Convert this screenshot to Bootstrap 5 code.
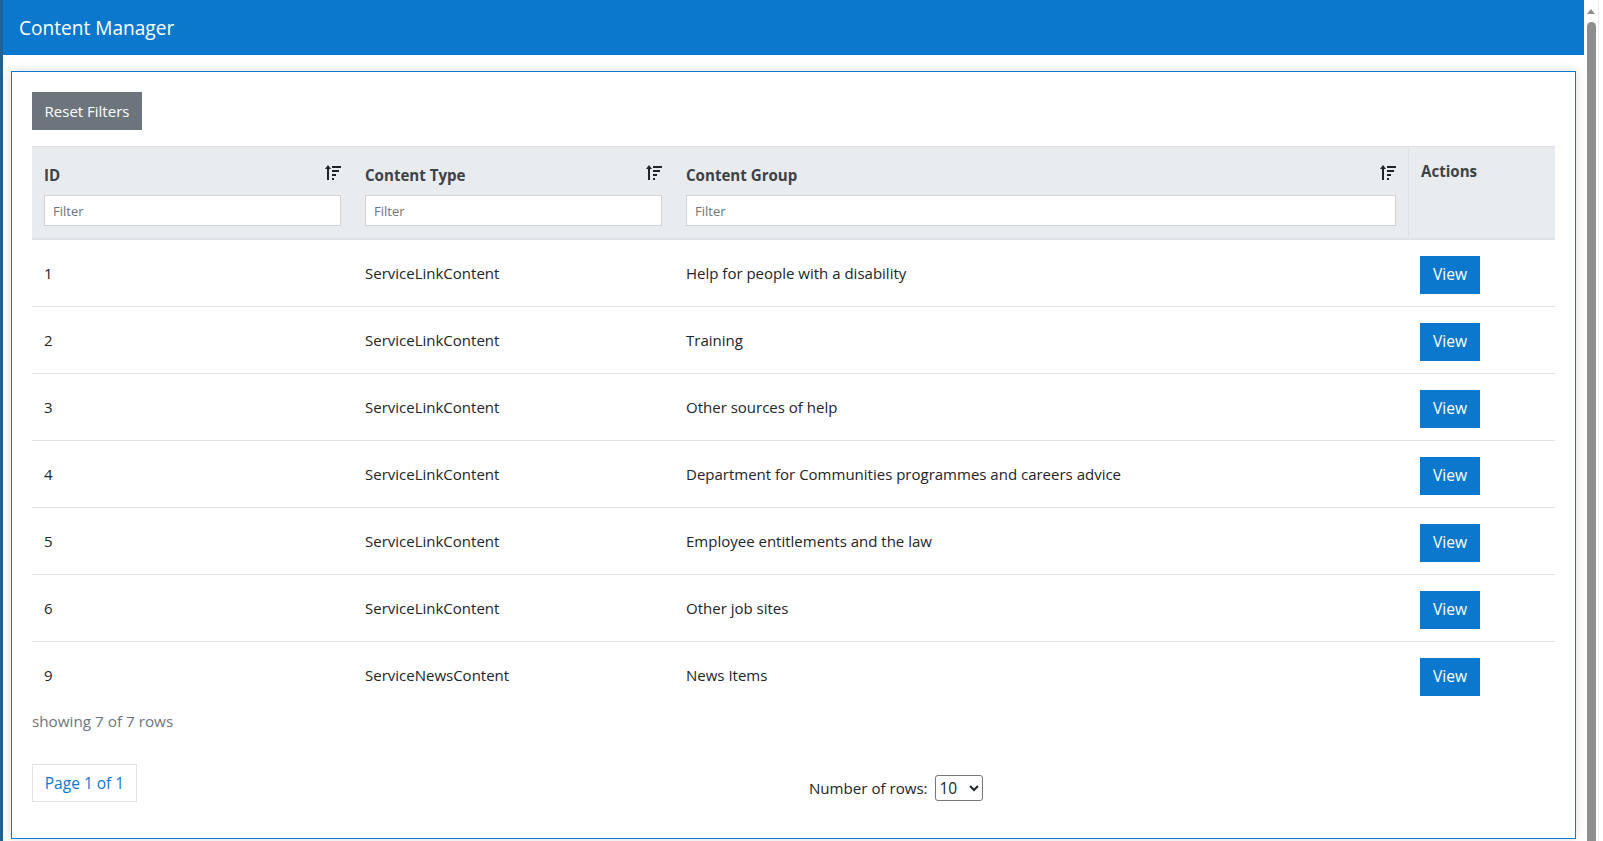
<!doctype html>
<html lang="en"><head><meta charset="utf-8"><title>Content Manager</title>
<link rel="stylesheet" href="https://cdn.jsdelivr.net/npm/bootstrap@5.3.0/dist/css/bootstrap.min.css">
<style>
html,body{height:100%;overflow:hidden}
body{font-family:"Open Sans","Noto Sans","Liberation Sans",sans-serif;font-size:15px;color:#212529;background:#fff}
.desk{height:841px;background:#fff}
.leftedge{width:3px;background:#1f6296;height:841px;flex:none}
.appcol{width:1581px;flex:none}
.topbar{height:55px;background:#0b78cd;color:#fff;font-size:19.1px;padding:2px 0 0 16px}
.panelbox{margin:16px 8px 0 8px;height:768px;border:1px solid #0b78cd;padding:20px;box-shadow:0 0 10px rgba(0,0,0,.14);background:#fff}
.btn-reset{background:#6c757d;color:#fff;border:0;border-radius:0;width:110px;height:38px;font-size:15px;padding:1px 0 0}
.gridtbl{width:1523px;margin-top:16px;border-collapse:separate;border-spacing:0;table-layout:fixed}
.gridtbl col:nth-child(1),.gridtbl col:nth-child(2){width:321px}
.gridtbl col:nth-child(3){width:734px}
.gridtbl col:nth-child(4){width:147px}
.gridtbl th{background:#e9ecef;border-top:1px solid #dee2e6;border-bottom:2px solid #dee2e6;vertical-align:top;padding:12px;font-weight:700;font-size:15.1px;color:#3d4247}
.gridtbl td{height:67px;border-bottom:1px solid #dee2e6;padding:16px 12px 0;vertical-align:top}
.gridtbl tr:last-child td{border-bottom:0}
.gridtbl th+th.actcol{border-left:1px solid #dee2e6;padding-left:12px}
.acttitle{display:block;margin-top:1px}
.headrow{height:24px;margin-top:5px}
.sorticon{width:16px;height:16px;display:block;margin-top:1px}
.filterbox{height:31px;border:1px solid #ced4da;border-radius:0;font-size:13px;padding:0 8px;margin-top:7px;width:100%;display:block;color:#6c757d}
.filterbox::placeholder{color:#6c757d}
.celltext{display:block;margin-top:6px}
.btn-view{background:#0b78cd;color:#fff;border:0;border-radius:0;width:60px;height:38px;padding:0;font-size:15.6px}
.countline{color:#6c757d;margin-top:0;line-height:24px;font-size:15.25px}
.pagerbox{width:105px;height:38px;border:1px solid #dee2e6;color:#0b78cd;margin-top:31px;line-height:36px;text-align:center;font-size:15.5px}
.rowpick{margin-left:777px;margin-top:-27px;font-size:15.1px}
.rowpick select{width:48px;height:26px;font-size:15.5px;margin-left:3px;padding:0;border:1px solid #767676;border-radius:3px;background:#fff;color:#212529}
.scrollcol{width:15px;flex:none;position:relative;border-right:1px solid #eee}
.thumbbar{margin:22px 0 0 3px;width:9px;height:819px;background:#8e8e8e;border-radius:5px 5px 0 0}
.uparrow{position:absolute;left:3px;top:9px;width:0;height:0;border-left:4.5px solid transparent;border-right:4.5px solid transparent;border-bottom:5px solid #8e8e8e}
</style></head><body>
<div class="d-flex desk">
<div class="leftedge"></div>
<div class="appcol">
<div class="topbar d-flex align-items-center">Content Manager</div>
<div class="panelbox">
<button class="btn btn-reset d-block" type="button">Reset Filters</button>
<table class="gridtbl">
<colgroup><col><col><col><col></colgroup>
<thead><tr>
<th><div class="d-flex justify-content-between headrow"><span>ID</span><svg class="sorticon" viewBox="0 0 16 16"><path d="M3 0l3 4H4v11H2V4H0z" fill="#212529"/><path d="M7 2h9M7 6h7M7 10h4M7 14h2" stroke="#212529" stroke-width="2"/></svg></div><input class="filterbox" placeholder="Filter"></th>
<th><div class="d-flex justify-content-between headrow"><span>Content Type</span><svg class="sorticon" viewBox="0 0 16 16"><path d="M3 0l3 4H4v11H2V4H0z" fill="#212529"/><path d="M7 2h9M7 6h7M7 10h4M7 14h2" stroke="#212529" stroke-width="2"/></svg></div><input class="filterbox" placeholder="Filter"></th>
<th><div class="d-flex justify-content-between headrow"><span>Content Group</span><svg class="sorticon" viewBox="0 0 16 16"><path d="M3 0l3 4H4v11H2V4H0z" fill="#212529"/><path d="M7 2h9M7 6h7M7 10h4M7 14h2" stroke="#212529" stroke-width="2"/></svg></div><input class="filterbox" placeholder="Filter"></th>
<th class="actcol"><span class="acttitle">Actions</span></th>
</tr></thead>
<tbody>
<tr><td><span class="celltext">1</span></td><td><span class="celltext">ServiceLinkContent</span></td><td><span class="celltext">Help for people with a disability</span></td><td><button class="btn btn-view" type="button">View</button></td></tr>
<tr><td><span class="celltext">2</span></td><td><span class="celltext">ServiceLinkContent</span></td><td><span class="celltext">Training</span></td><td><button class="btn btn-view" type="button">View</button></td></tr>
<tr><td><span class="celltext">3</span></td><td><span class="celltext">ServiceLinkContent</span></td><td><span class="celltext">Other sources of help</span></td><td><button class="btn btn-view" type="button">View</button></td></tr>
<tr><td><span class="celltext">4</span></td><td><span class="celltext">ServiceLinkContent</span></td><td><span class="celltext">Department for Communities programmes and careers advice</span></td><td><button class="btn btn-view" type="button">View</button></td></tr>
<tr><td><span class="celltext">5</span></td><td><span class="celltext">ServiceLinkContent</span></td><td><span class="celltext">Employee entitlements and the law</span></td><td><button class="btn btn-view" type="button">View</button></td></tr>
<tr><td><span class="celltext">6</span></td><td><span class="celltext">ServiceLinkContent</span></td><td><span class="celltext">Other job sites</span></td><td><button class="btn btn-view" type="button">View</button></td></tr>
<tr><td><span class="celltext">9</span></td><td><span class="celltext">ServiceNewsContent</span></td><td><span class="celltext">News Items</span></td><td><button class="btn btn-view" type="button">View</button></td></tr>
</tbody></table>
<div class="countline">showing 7 of 7 rows</div>
<div class="pagerbox">Page 1 of 1</div>
<div class="rowpick">Number of rows: <select><option>10</option><option>25</option></select></div>
</div>
</div>
<div class="scrollcol"><div class="uparrow"></div><div class="thumbbar"></div></div>
</div>
</body></html>
